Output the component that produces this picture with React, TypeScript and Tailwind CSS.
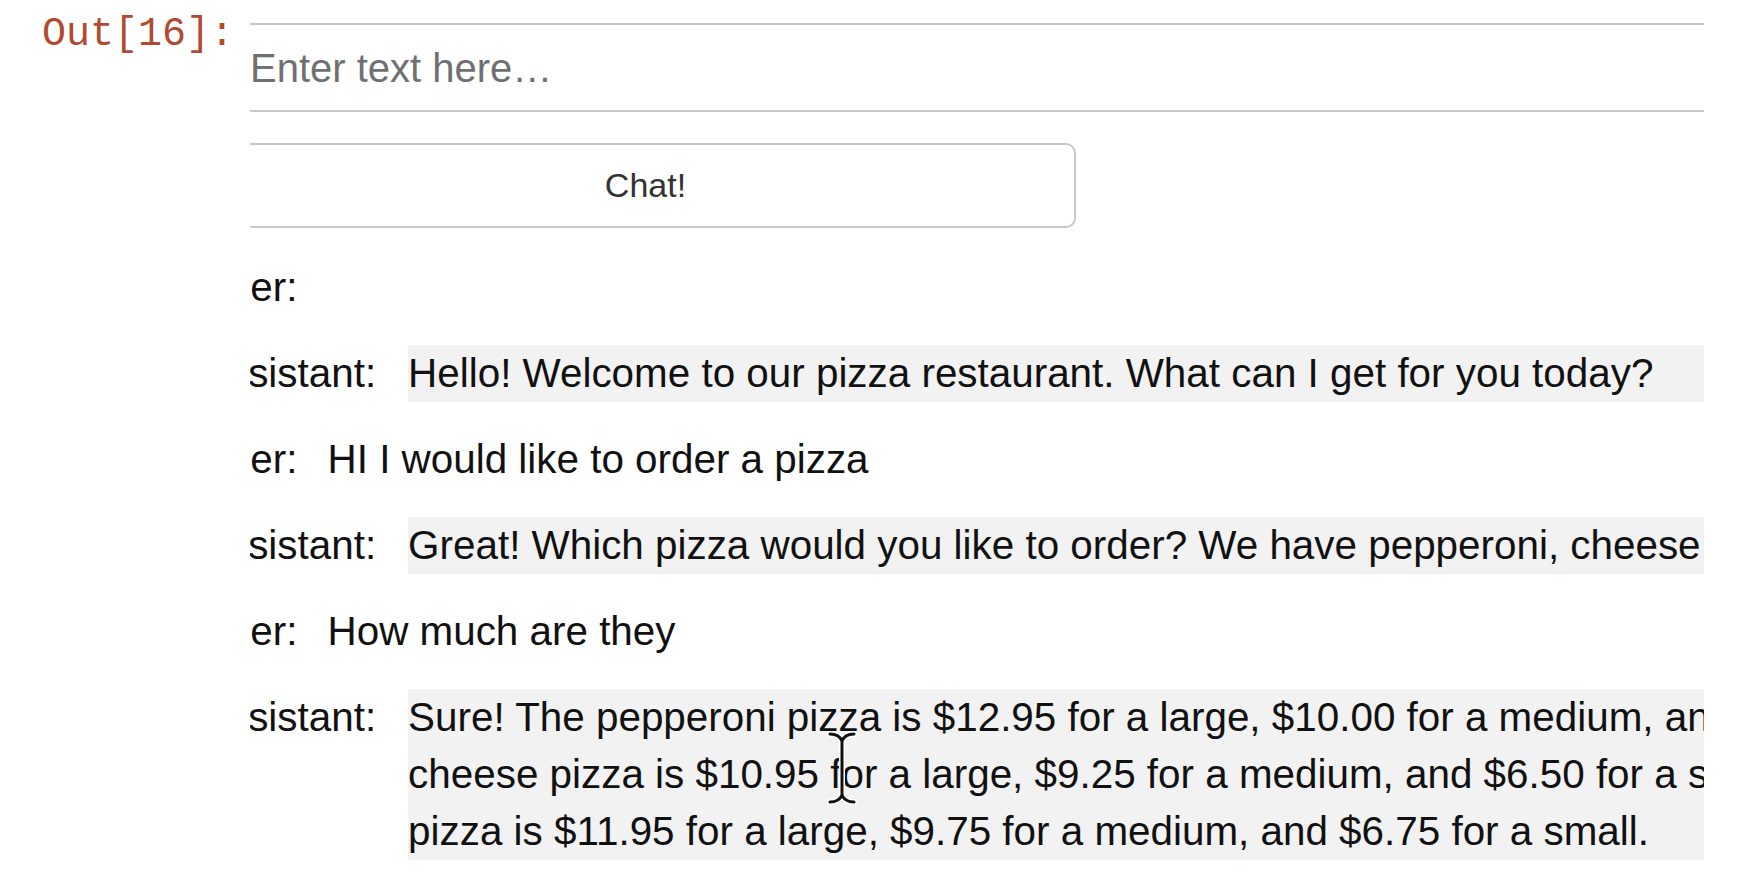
import React from "react";

type Row = { role: "User" | "Assistant"; lines: string[] };

const rows: Row[] = [
  { role: "User", lines: [] },
  {
    role: "Assistant",
    lines: ["Hello! Welcome to our pizza restaurant. What can I get for you today?"],
  },
  { role: "User", lines: ["HI I would like to order a pizza"] },
  {
    role: "Assistant",
    lines: [
      "Great! Which pizza would you like to order? We have pepperoni, cheese, and eggplant pizzas.",
    ],
  },
  { role: "User", lines: ["How much are they"] },
  {
    role: "Assistant",
    lines: [
      "Sure! The pepperoni pizza is $12.95 for a large, $10.00 for a medium, and $7.00 for a small. The",
      "cheese pizza is $10.95 for a large, $9.25 for a medium, and $6.50 for a small. The eggplant",
      "pizza is $11.95 for a large, $9.75 for a medium, and $6.75 for a small.",
    ],
  },
];

function IBeam() {
  // mouse text cursor sitting over the last message
  return (
    <svg width="30" height="74" viewBox="0 0 30 74" className="absolute left-[827px] top-[731px]">
      <g fill="none" strokeLinecap="round">
        <path
          d="M3 3 C9 3 13 5 15 10 C17 5 21 3 27 3 M15 10 L15 64 M3 71 C9 71 13 69 15 64 C17 69 21 71 27 71"
          stroke="white"
          strokeWidth="6"
        />
        <path
          d="M3 3 C9 3 13 5 15 10 C17 5 21 3 27 3 M15 10 L15 64 M3 71 C9 71 13 69 15 64 C17 69 21 71 27 71"
          stroke="#111"
          strokeWidth="3"
        />
      </g>
    </svg>
  );
}

function ChatRow({ row }: { row: Row }) {
  const isBot = row.role === "Assistant";
  return (
    <div className="flex items-start text-[40.4px] leading-[57px] text-[#111]">
      <span className="shrink-0 whitespace-nowrap">{row.role}:</span>
      {row.lines.length > 0 && (
        <div className={`w-[1600px] shrink-0 ${isBot ? "ml-[32px] bg-[#f2f2f2]" : "ml-[30px]"}`}>
          {row.lines.map((l, i) => (
            <div key={i} className="whitespace-nowrap">
              {l}
            </div>
          ))}
        </div>
      )}
    </div>
  );
}

export default function App() {
  return (
    <div className="relative w-[1738px] h-[886px] overflow-hidden bg-white font-['Liberation_Sans',Arial,sans-serif]">
      <div className="flex pt-[23px]">
        {/* prompt */}
        <div className="w-[250px] shrink-0 pl-[42px]">
          <span className="font-['Liberation_Mono','Courier_New',monospace] text-[40px] leading-[24px] text-[#b04a30] whitespace-nowrap">
            Out[16]:
          </span>
        </div>

        {/* output area, scrolled a bit to the right */}
        <div className="w-[1454px] shrink-0 overflow-hidden">
          <div className="-ml-[49px] w-[2200px] flex flex-col">
            <div className="ml-[14px] h-[89px] border-y-2 border-[#c8c8c8] pl-[35px] flex items-center text-[40px] text-[#707070]">
              Enter text here…
            </div>

            <button className="mt-[31px] ml-[14px] h-[85px] w-[861px] rounded-[10px] border-2 border-[#c8c8c8] bg-white text-[34px] text-[#333] flex items-center justify-center">
              Chat!
            </button>

            <div className="mt-[31px] flex flex-col gap-[29px]">
              {rows.map((r, i) => (
                <ChatRow key={i} row={r} />
              ))}
            </div>
          </div>
        </div>
      </div>
      <IBeam />
    </div>
  );
}
